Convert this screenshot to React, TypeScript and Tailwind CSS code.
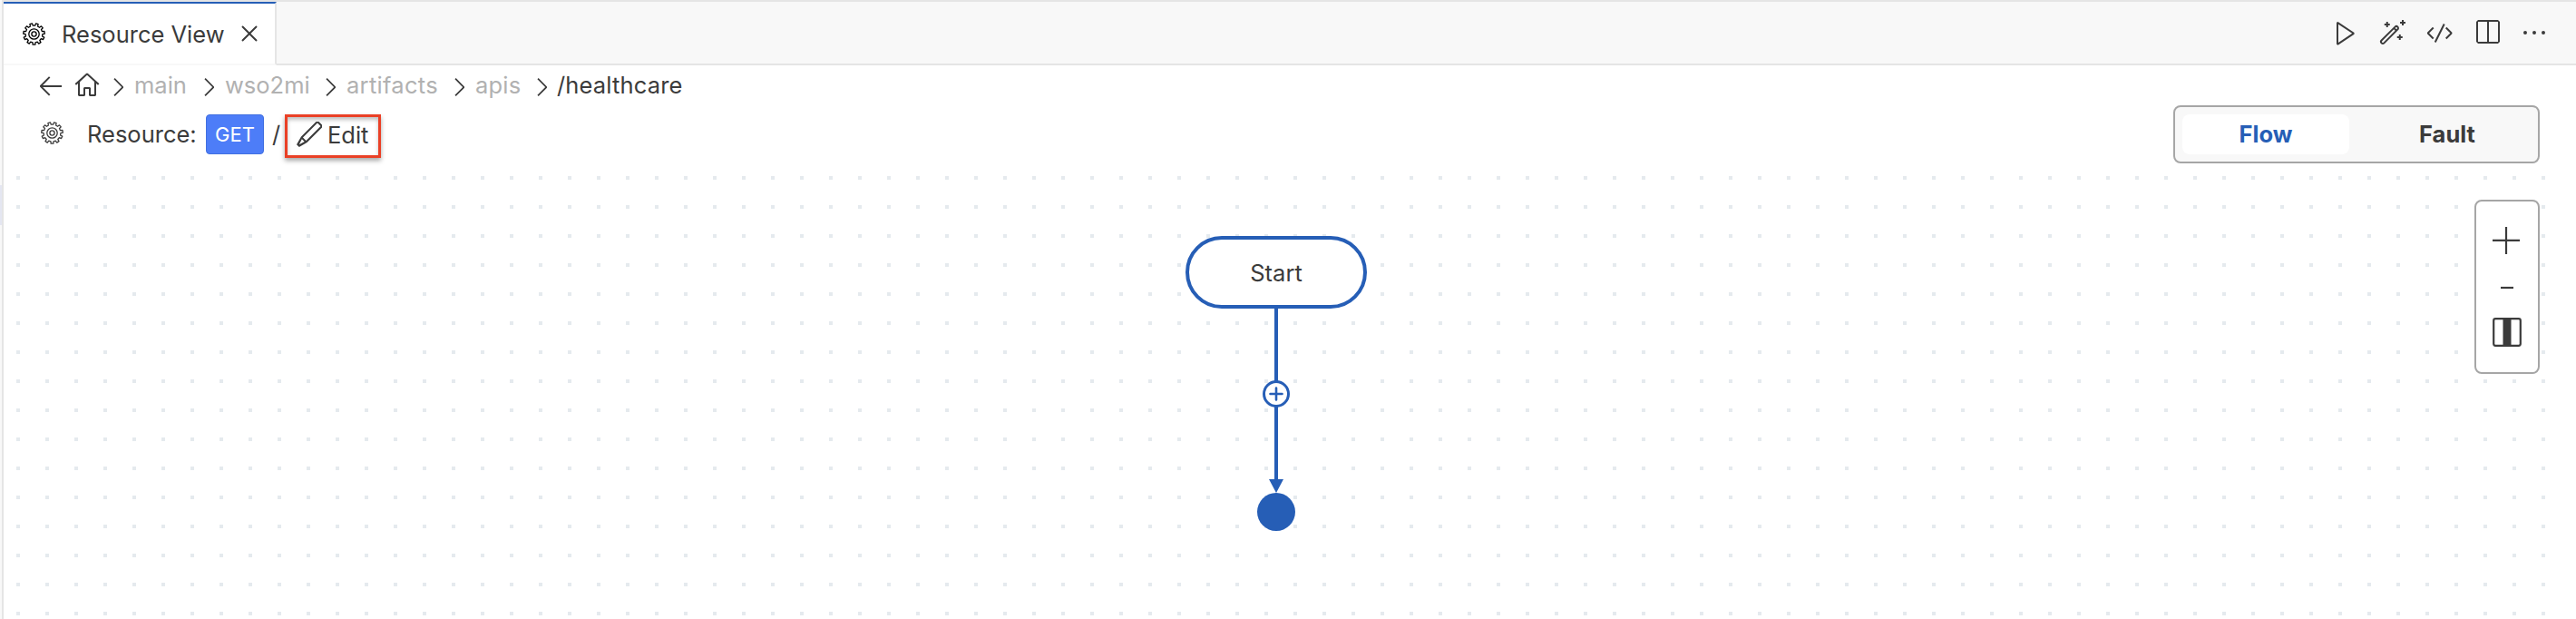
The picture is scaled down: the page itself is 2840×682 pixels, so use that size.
import { VscPlay, VscWand, VscCode, VscSplitHorizontal, VscEllipsis, VscClose, VscArrowLeft, VscHome, VscChevronRight, VscEdit } from "react-icons/vsc";

function Gear() {
  const outline: string[] = [];
  const teeth = 11;
  for (let i = 0; i < teeth; i++) {
    const points: [number, number][] = [[9.4, -0.28], [11.8, -0.2], [11.8, 0.2], [9.4, 0.28]];
    for (const [radius, offset] of points) {
      const angle = ((i + 0.5 + offset) * 2 * Math.PI) / teeth;
      outline.push(`${(12.5 + radius * Math.sin(angle)).toFixed(2)},${(12.5 - radius * Math.cos(angle)).toFixed(2)}`);
    }
  }
  return (
    <svg viewBox="0 0 25 25" className="size-[25px] shrink-0" fill="none" stroke="currentColor" strokeWidth="1.3" strokeLinejoin="round">
      <polygon points={outline.join(" ")} />
      <circle cx="12.5" cy="12.5" r="5.7" />
      <circle cx="12.5" cy="12.5" r="2.6" />
    </svg>
  );
}

function Dots() {
  return (
    <svg className="absolute left-[14px] top-[14px] h-[486px] w-[2788px]">
      <defs>
        <pattern id="dots" width="32" height="32" patternUnits="userSpaceOnUse">
          <rect width="4" height="4" fill="#e5eaee" />
        </pattern>
      </defs>
      <rect width="2788" height="486" fill="url(#dots)" />
    </svg>
  );
}

function Connector() {
  return (
    <svg className="absolute left-[1381px] top-[160px] h-[250px] w-11" viewBox="0 0 44 250" fill="none" stroke="#265eb6">
      <path d="M22 0V190" strokeWidth="4" />
      <circle cx="22" cy="94" r="13.5" fill="white" strokeWidth="3" />
      <path d="M15.5 94h13M22 87.5v13" strokeWidth="2.6" strokeLinecap="round" />
      <path d="M14 188h16l-8 15z" fill="#265eb6" stroke="none" />
      <circle cx="22" cy="224" r="21" fill="#265eb6" stroke="none" />
    </svg>
  );
}

const crumbs = [
  { label: "main", box: "w-[100px]" },
  { label: "wso2mi", box: "w-[134px]" },
  { label: "artifacts", box: "w-[142px] tracking-[0.3px]" },
  { label: "apis", box: "w-[91px] tracking-[0.2px]" },
];

export default function App() {
  return (
    <div className="flex h-[682px] w-[2840px] overflow-hidden bg-white font-['Inter',sans-serif] text-[25.5px] leading-8 text-[#3b3b3b]">
      <div className="w-[2px] shrink-0 bg-[#f8f8f8] pt-[204px]"><div className="h-11 bg-[#e4e6f1]" /></div>
      <div className="flex w-[2838px] flex-col border-l-2 border-t-2 border-[#e5e5e5]">
        <header className="flex h-[70px] shrink-0 bg-[#f8f8f8]">
          <div className="flex w-[301px] shrink-0 items-center border-r-2 border-b-2 border-t-2 border-r-[#e5e5e5] border-b-[#f8f8f8] border-t-[#265eb6] bg-white pl-[21px]">
            <span className="text-black"><Gear /></span>
            <span className="ml-[18px] w-[187px] whitespace-nowrap pt-px">Resource View</span>
            <VscClose className="ml-1 size-[32px] shrink-0" />
          </div>
          <div className="flex flex-1 items-center justify-end gap-5 border-b-2 border-[#e5e5e5] pr-[30px]">
            <VscPlay className="size-8" />
            <VscWand className="size-8" />
            <VscCode className="size-8" />
            <VscSplitHorizontal className="size-8" />
            <VscEllipsis className="size-8" />
          </div>
        </header>
        <nav className="flex h-[44px] shrink-0 items-center pl-[36px]">
          <VscArrowLeft className="size-8" />
          <VscHome className="ml-2 size-8" />
          <div className="ml-[2px] flex">
            {crumbs.map((c) => (
              <div key={c.label} className={`flex shrink-0 items-center gap-[2px] ${c.box}`}>
                <VscChevronRight className="mt-[3px] size-8 shrink-0" />
                <span className="text-[#b1b1b1]">{c.label}</span>
              </div>
            ))}
          </div>
          <VscChevronRight className="mt-[3px] size-8" />
          <span className="ml-px tracking-[0.15px]">/healthcare</span>
        </nav>
        <section className="flex h-[64px] shrink-0 items-center pl-[41px] pr-[40px]">
          <div className="-mt-1"><Gear /></div>
          <span className="ml-[26px] w-[131px]">Resource:</span>
          <span className="flex h-11 w-16 items-center justify-center rounded border border-[#4270e0] bg-[#4d7df8] text-[22px] text-white">GET</span>
          <span className="ml-[9px] w-[14px]">/</span>
          <button className="mt-1 flex h-12 w-[106px] items-center border-[3px] border-[#ea4026] shadow-[0_3px_5px_rgba(0,0,0,0.35),inset_0_3px_4px_rgba(0,0,0,0.25)]">
            <VscEdit className="-mt-1 ml-2 size-8" />
            <span className="-mt-[3px] ml-1">Edit</span>
          </button>
          <div className="ml-auto flex h-16 w-[404px] gap-4 rounded-lg border-2 border-[#a6a6a6] bg-[#f8f8f8] p-2 font-bold">
            <span className="flex w-[184px] items-center justify-center rounded-lg bg-white text-[#265eb6]">Flow</span>
            <span className="flex w-[184px] items-center justify-center">Fault</span>
          </div>
        </section>
        <main className="relative min-h-0 flex-1">
          <Dots />
          <Connector />
          <div className="absolute left-[1303px] top-20 flex h-20 w-[200px] items-center justify-center rounded-full border-4 border-[#265eb6] bg-white pt-[2px]">Start</div>
          <div className="absolute left-[2724px] top-10 flex h-48 w-[72px] flex-col items-center rounded-lg border-2 border-[#a6a6a6] bg-white">
            <svg className="h-[188px] w-[68px]" viewBox="0 0 68 188" fill="none" stroke="#3b3b3b" strokeWidth="2.2">
              <path d="M18 42.8h30M33 28v30" />
              <path d="M27 95h14" />
              <rect x="19.2" y="129.2" width="29.6" height="29.6" rx="2" />
              <path d="M34 129v30" strokeWidth="9" />
            </svg>
          </div>
        </main>
      </div>
    </div>
  );
}
